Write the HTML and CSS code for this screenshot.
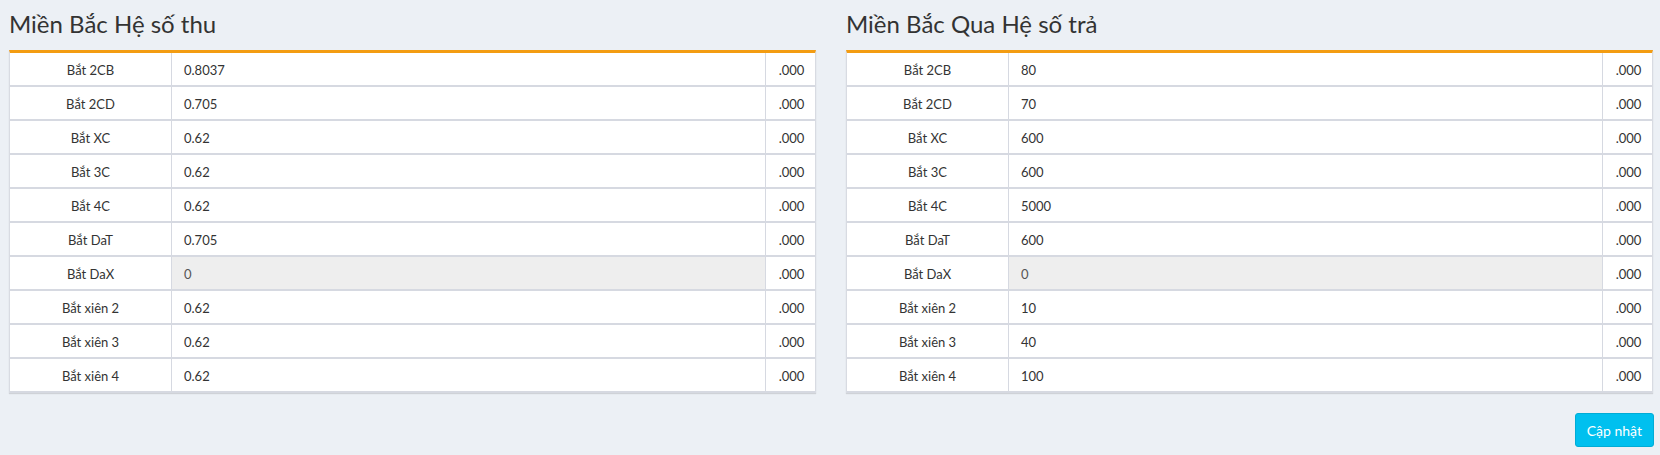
FILE: index.html
```html
<!DOCTYPE html>
<html lang="vi">
<head>
<meta charset="utf-8">
<title>Hệ số</title>
<link rel="stylesheet" href="styles.css">
</head>
<body>
<div class="page">
  <div class="cols">
    <section class="col">
      <h3 class="title">Miền Bắc Hệ số thu</h3>
      <div class="box">
        <div class="row"><div class="label">Bắt 2CB</div><div class="val">0.8037</div><div class="addon">.000</div></div>
        <div class="row"><div class="label">Bắt 2CD</div><div class="val">0.705</div><div class="addon">.000</div></div>
        <div class="row"><div class="label">Bắt XC</div><div class="val">0.62</div><div class="addon">.000</div></div>
        <div class="row"><div class="label">Bắt 3C</div><div class="val">0.62</div><div class="addon">.000</div></div>
        <div class="row"><div class="label">Bắt 4C</div><div class="val">0.62</div><div class="addon">.000</div></div>
        <div class="row"><div class="label">Bắt DaT</div><div class="val">0.705</div><div class="addon">.000</div></div>
        <div class="row"><div class="label">Bắt DaX</div><div class="val disabled">0</div><div class="addon">.000</div></div>
        <div class="row"><div class="label">Bắt xiên 2</div><div class="val">0.62</div><div class="addon">.000</div></div>
        <div class="row"><div class="label">Bắt xiên 3</div><div class="val">0.62</div><div class="addon">.000</div></div>
        <div class="row"><div class="label">Bắt xiên 4</div><div class="val">0.62</div><div class="addon">.000</div></div>
      </div>
    </section>
    <section class="col">
      <h3 class="title">Miền Bắc Qua Hệ số trả</h3>
      <div class="box">
        <div class="row"><div class="label">Bắt 2CB</div><div class="val">80</div><div class="addon">.000</div></div>
        <div class="row"><div class="label">Bắt 2CD</div><div class="val">70</div><div class="addon">.000</div></div>
        <div class="row"><div class="label">Bắt XC</div><div class="val">600</div><div class="addon">.000</div></div>
        <div class="row"><div class="label">Bắt 3C</div><div class="val">600</div><div class="addon">.000</div></div>
        <div class="row"><div class="label">Bắt 4C</div><div class="val">5000</div><div class="addon">.000</div></div>
        <div class="row"><div class="label">Bắt DaT</div><div class="val">600</div><div class="addon">.000</div></div>
        <div class="row"><div class="label">Bắt DaX</div><div class="val disabled">0</div><div class="addon">.000</div></div>
        <div class="row"><div class="label">Bắt xiên 2</div><div class="val">10</div><div class="addon">.000</div></div>
        <div class="row"><div class="label">Bắt xiên 3</div><div class="val">40</div><div class="addon">.000</div></div>
        <div class="row"><div class="label">Bắt xiên 4</div><div class="val">100</div><div class="addon">.000</div></div>
      </div>
    </section>
  </div>
  <div class="actions"><button class="btn-info" type="button">Cập nhật</button></div>
</div>
</body>
</html>
```
FILE: styles.css
```css
* { box-sizing: border-box; }
html, body { margin: 0; padding: 0; }
body {
  background: #ecf0f5;
  font-family: Lato, "Noto Sans", "Liberation Sans", sans-serif;
  color: #333;
  font-size: 13px;
}
.page { padding: 0 7px 0 9px; }
.cols {
  display: flex;
  gap: 30px;
}
.col { flex: 1 1 0; min-width: 0; }
.title {
  margin: 0;
  height: 50px;
  padding-top: 10px;
  font-size: 24px;
  font-weight: 400;
  line-height: 28px;
  color: #333;
}
.box {
  background: #fff;
  border-top: 3px solid #f39c12;
  box-shadow: 0 1px 1px rgba(0,0,0,0.12);
  border-left: 1px solid #d8dbe2;
  border-right: 1px solid #d8dbe2;
}
.row {
  display: flex;
  height: 34px;
  border-bottom: 2px solid #d6d9e1;
}
.label {
  width: 162px;
  flex: none;
  text-align: center;
  padding-top: 1px;
  line-height: 32px;
  border-right: 1px solid #d6d9e1;
}
.val {
  flex: 1;
  padding-left: 12px;
  padding-top: 1px;
  line-height: 32px;
  border-right: 1px solid #d6d9e1;
}
.val.disabled { background: #eeeeee; color: #555; }
.addon {
  width: 49px;
  flex: none;
  text-align: center;
  padding-top: 1px;
  padding-left: 2px;
  line-height: 32px;
}
.actions {
  display: flex;
  justify-content: flex-end;
  padding-top: 20px;
}
.btn-info {
  background: #00c0ef;
  border: 1px solid #00acd6;
  color: #fff;
  border-radius: 3px;
  height: 34px;
  padding: 0 11px;
  margin-right: -1px;
  font-family: inherit;
  font-size: 14px;
}
```
